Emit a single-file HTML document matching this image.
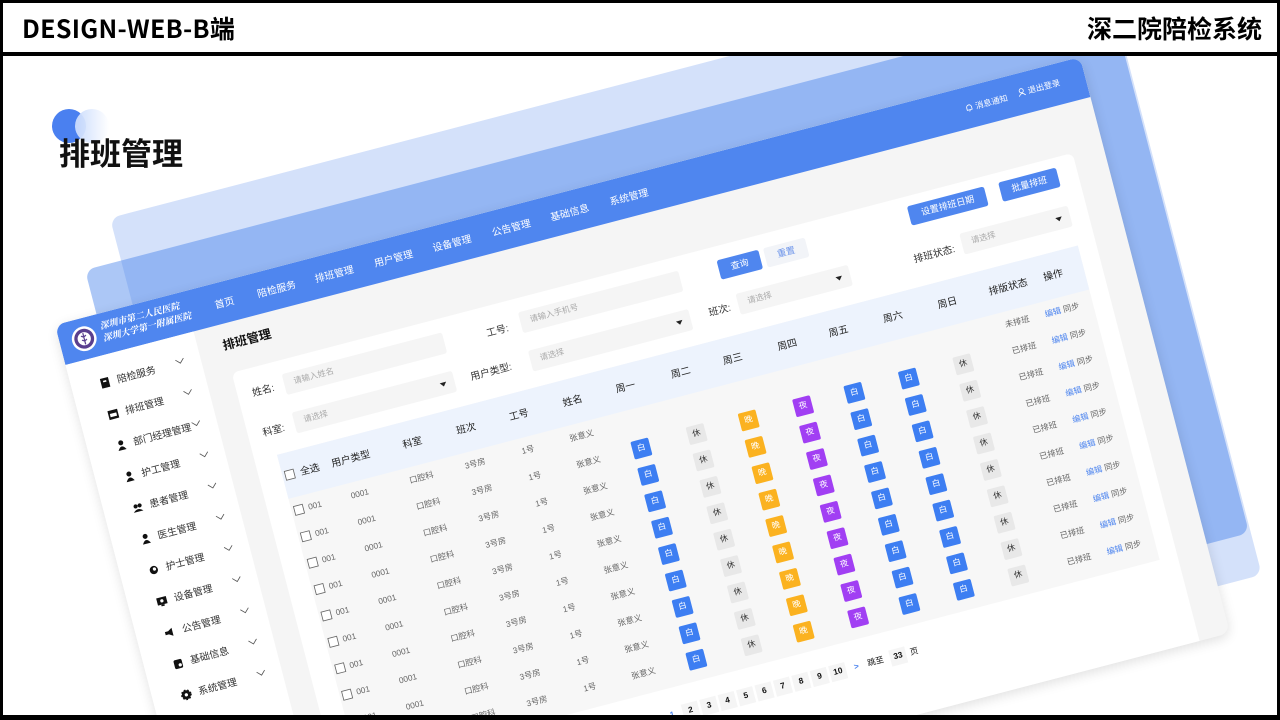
<!DOCTYPE html>
<html><head><meta charset="utf-8">
<style>
*{margin:0;padding:0;box-sizing:border-box}
html,body{width:1280px;height:720px;overflow:hidden}
body{background:#fff;font-family:"Liberation Sans","Noto Sans CJK SC",sans-serif;color:#333}
#wrap{position:relative;width:1280px;height:720px;overflow:hidden}
.abs{position:absolute}
.layer{position:absolute;left:0;top:0;transform-origin:0 0;border-radius:12px}
#app{position:absolute;left:0;top:0;width:1280px;height:720px;transform-origin:0 0;transform:matrix(0.8008,-0.2094,0.2083,0.8,55,325);background:#f5f5f5;border-radius:12px;overflow:hidden;box-shadow:0 4px 14px rgba(0,0,0,.12)}
.hdr{position:absolute;left:0;top:0;width:1280px;height:50px;background:#4f86ef}
.nav{position:absolute;top:18px;font-size:12px;color:#fff;width:80px;text-align:center;margin-left:-40px;line-height:16px}
.side{position:absolute;left:0;top:50px;width:160px;height:670px;background:#fff}
.si{position:absolute;left:22px;width:130px;height:20px;font-size:12px;line-height:20px;color:#333}
.si svg.ic{position:absolute;left:12px;top:3px}
.si span{position:absolute;left:34px;white-space:nowrap}
.si svg.ch{position:absolute;left:106px;top:2px}
.card{position:absolute;left:192px;top:110px;width:1050px;height:640px;background:#fff;border-radius:8px}
.lbl{position:absolute;font-size:12px;color:#333;line-height:16px;white-space:nowrap}
.inp{position:absolute;height:26px;background:#f5f5f5;border-radius:3px;font-size:10px;color:#aaa;line-height:26px;padding-left:12px}
.inp i{position:absolute;right:10px;top:11px;border:4px solid transparent;border-top:5px solid #222;border-bottom:0}
.btn{position:absolute;height:24px;border-radius:3px;font-size:11px;line-height:24px;text-align:center;color:#fff;background:#4f86ef}
.tbl{position:absolute;left:220px;top:220px;width:1000px;height:393px;background:#f7f7f7}
.th{position:absolute;left:0;top:0;width:1000px;height:55px;background:#edf3fd}
.row{position:absolute;left:0;width:1000px;height:33px}
.row>*{position:absolute;top:0;height:33px;line-height:33px;width:70px;text-align:center;font-size:10px;color:#666}
.th>*{position:absolute;top:0;height:55px;line-height:55px;width:70px;text-align:center;font-size:12px;color:#222}
.row>:nth-child(1),.th>:nth-child(1){left:3px;width:14px}
.row>:nth-child(2){left:-6px}
.th>:nth-child(2){left:4px;width:60px}
.row>:nth-child(3),.th>:nth-child(3){left:50px}
.row>:nth-child(4),.th>:nth-child(4){left:127px}
.row>:nth-child(5),.th>:nth-child(5){left:194px}
.row>:nth-child(6),.th>:nth-child(6){left:260px}
.row>:nth-child(7),.th>:nth-child(7){left:327px}
.th>:nth-child(8){left:393px}.th>:nth-child(9){left:462px}.th>:nth-child(10){left:527px}.th>:nth-child(11){left:595px}.th>:nth-child(12){left:659px}.th>:nth-child(13){left:727px}.th>:nth-child(14){left:795px}.th>:nth-child(15){left:871px}.th>:nth-child(16){left:927px}
.cb{display:block;margin-top:10px;width:12px;height:12px;border:1px solid #666;background:#fff}
.row>b{width:22px;height:22px;top:5px;line-height:22px;font-weight:normal;font-size:10px;color:#fff;border-radius:2px}
.row>:nth-child(8){left:417px;background:#3d7ef2}
.row>:nth-child(9){left:486px;background:#e8e8e8;color:#333!important}
.row>:nth-child(10){left:551px;background:#fbb220}
.row>:nth-child(11){left:619px;background:#a13ff3}
.row>:nth-child(12){left:683px;background:#3d7ef2}
.row>:nth-child(13){left:751px;background:#3d7ef2}
.row>:nth-child(14){left:819px;background:#e8e8e8;color:#333!important}
.row>b.e{visibility:hidden}
.row>:nth-child(15){left:871px}
.row>:nth-child(16){left:917px;width:90px}
.ed{color:#4f86ef}
.pg{position:absolute;top:636px;width:20px;height:20px;background:#f5f5f5;font-size:10px;font-weight:bold;line-height:20px;text-align:center;color:#111}
</style></head><body><div id="wrap">

<div class="layer" style="width:1238px;height:770px;background:#d4e1fa;transform:matrix(0.8008,-0.2094,0.2083,0.8,110,218)"></div>
<div class="layer" style="width:1281px;height:664px;background:rgba(70,130,235,0.45);transform:matrix(0.8008,-0.2094,0.2083,0.8,85,270)"></div>

<div id="app">
  <div class="hdr">
    <svg class="abs" style="left:14px;top:9px" width="32" height="32" viewBox="0 0 32 32"><circle cx="16" cy="16" r="15" fill="#fff"/><circle cx="16" cy="16" r="12" fill="#5a3f8e"/><circle cx="16" cy="16" r="8" fill="#fff"/><path d="M16 9v14M13 12q3 3 6 0M13 17q3 3 6 0" stroke="#5a3f8e" stroke-width="1.5" fill="none"/></svg>
    <div class="abs" style="left:52px;top:8px;font-family:'Noto Serif CJK SC',serif;font-size:11px;line-height:15px;color:#fff;font-weight:bold;font-style:italic;white-space:nowrap">深圳市第二人民医院<br>深圳大学第一附属医院</div>
    <div class="nav" style="left:205px">首页</div>
    <div class="nav" style="left:270px">陪检服务</div>
    <div class="nav" style="left:342px">排班管理</div>
    <div class="nav" style="left:416px">用户管理</div>
    <div class="nav" style="left:489px">设备管理</div>
    <div class="nav" style="left:563px">公告管理</div>
    <div class="nav" style="left:636px">基础信息</div>
    <div class="nav" style="left:710px">系统管理</div>
    <div class="abs" style="left:1130px;top:17px;font-size:10px;color:#fff;white-space:nowrap"><svg width="10" height="10" viewBox="0 0 10 10" style="vertical-align:-1px"><path d="M2 8V5a3 3 0 0 1 6 0v3H1.5h7M4 9.5h2" stroke="#fff" fill="none"/></svg> 消息通知</div>
    <div class="abs" style="left:1196px;top:15px;font-size:10px;color:#fff;white-space:nowrap"><svg width="10" height="10" viewBox="0 0 10 10" style="vertical-align:-1px"><circle cx="5" cy="3.5" r="2.5" stroke="#fff" fill="none"/><path d="M1 10q4-6 8 0" stroke="#fff" fill="none"/></svg> 退出登录</div>
  </div>
  <div class="side">
    <div class="si" style="top:23px"><svg class="ic" width="14" height="14"><rect x="2" y="1" width="10" height="12" fill="#111"/><rect x="5" y="4" width="4" height="2" fill="#fff"/></svg><span>陪检服务</span><svg class="ch" width="14" height="10"><polyline points="2,3 7,8 12,3" stroke="#555" fill="none"/></svg></div>
    <div class="si" style="top:62px"><svg class="ic" width="14" height="14"><rect x="1" y="2" width="12" height="11" fill="#111"/><rect x="3" y="6" width="8" height="4" fill="#fff"/></svg><span>排班管理</span><svg class="ch" width="14" height="10"><polyline points="2,3 7,8 12,3" stroke="#555" fill="none"/></svg></div>
    <div class="si" style="top:101px"><svg class="ic" width="14" height="14"><circle cx="7" cy="4" r="3" fill="#111"/><path d="M2 13q5-9 10 0z" fill="#111"/></svg><span>部门经理管理</span><svg class="ch" width="14" height="10"><polyline points="2,3 7,8 12,3" stroke="#555" fill="none"/></svg></div>
    <div class="si" style="top:140px"><svg class="ic" width="14" height="14"><circle cx="7" cy="4" r="3" fill="#111"/><path d="M2 13q5-9 10 0z" fill="#111"/></svg><span>护工管理</span><svg class="ch" width="14" height="10"><polyline points="2,3 7,8 12,3" stroke="#555" fill="none"/></svg></div>
    <div class="si" style="top:179px"><svg class="ic" width="14" height="14"><circle cx="5" cy="5" r="2.5" fill="#111"/><circle cx="10" cy="5" r="2.5" fill="#111"/><path d="M1 12q6-6 12 0z" fill="#111"/></svg><span>患者管理</span><svg class="ch" width="14" height="10"><polyline points="2,3 7,8 12,3" stroke="#555" fill="none"/></svg></div>
    <div class="si" style="top:218px"><svg class="ic" width="14" height="14"><circle cx="7" cy="4" r="3" fill="#111"/><path d="M2 13q5-9 10 0z" fill="#111"/></svg><span>医生管理</span><svg class="ch" width="14" height="10"><polyline points="2,3 7,8 12,3" stroke="#555" fill="none"/></svg></div>
    <div class="si" style="top:257px"><svg class="ic" width="14" height="14"><circle cx="7" cy="7" r="5" fill="#111"/><circle cx="8" cy="6" r="2" fill="#fff"/></svg><span>护士管理</span><svg class="ch" width="14" height="10"><polyline points="2,3 7,8 12,3" stroke="#555" fill="none"/></svg></div>
    <div class="si" style="top:296px"><svg class="ic" width="14" height="14"><rect x="1" y="2" width="12" height="9" fill="#111"/><circle cx="7" cy="6.5" r="2" fill="#fff"/><rect x="5" y="11" width="4" height="2" fill="#111"/></svg><span>设备管理</span><svg class="ch" width="14" height="10"><polyline points="2,3 7,8 12,3" stroke="#555" fill="none"/></svg></div>
    <div class="si" style="top:335px"><svg class="ic" width="14" height="14"><path d="M1 5h4l5-3v10l-5-3H1z" fill="#111"/></svg><span>公告管理</span><svg class="ch" width="14" height="10"><polyline points="2,3 7,8 12,3" stroke="#555" fill="none"/></svg></div>
    <div class="si" style="top:374px"><svg class="ic" width="14" height="14"><rect x="2" y="2" width="10" height="11" rx="2" fill="#111"/><circle cx="9" cy="9" r="2" fill="#fff"/></svg><span>基础信息</span><svg class="ch" width="14" height="10"><polyline points="2,3 7,8 12,3" stroke="#555" fill="none"/></svg></div>
    <div class="si" style="top:413px"><svg class="ic" width="14" height="14"><circle cx="7" cy="7" r="5.5" fill="#111" stroke="#111" stroke-width="2" stroke-dasharray="2 2"/><circle cx="7" cy="7" r="2" fill="#fff"/></svg><span>系统管理</span><svg class="ch" width="14" height="10"><polyline points="2,3 7,8 12,3" stroke="#555" fill="none"/></svg></div>
  </div>
  <div class="abs" style="left:190px;top:65px;font-size:15px;font-weight:bold;color:#111">排班管理</div>
  <div class="card"></div>
  <div class="lbl" style="left:210px;top:132px">姓名:</div>
  <div class="inp" style="left:250px;top:127px;width:200px">请输入姓名</div>
  <div class="lbl" style="left:502px;top:134px">工号:</div>
  <div class="inp" style="left:545px;top:127px;width:200px">请输入手机号</div>
  <div class="btn" style="left:793px;top:127px;width:52px">查询</div>
  <div class="btn" style="left:851px;top:127px;width:52px;background:#f2f4f8;color:#6c94ea">重置</div>
  <div class="btn" style="left:1032px;top:122px;width:96px">设置排班日期</div>
  <div class="btn" style="left:1146px;top:122px;width:72px">批量排班</div>
  <div class="lbl" style="left:210px;top:182px">科室:</div>
  <div class="inp" style="left:250px;top:175px;width:200px">请选择<i></i></div>
  <div class="lbl" style="left:470px;top:180px">用户类型:</div>
  <div class="inp" style="left:545px;top:175px;width:200px">请选择<i></i></div>
  <div class="lbl" style="left:768px;top:178px">班次:</div>
  <div class="inp" style="left:805px;top:172px;width:140px">请选择<i></i></div>
  <div class="lbl" style="left:1024px;top:178px">排班状态:</div>
  <div class="inp" style="left:1085px;top:170px;width:135px">请选择<i></i></div>

  <div class="tbl">
    <div class="th"><span><i class="cb" style="margin-top:21px"></i></span><span>全选</span><span>用户类型</span><span>科室</span><span>班次</span><span>工号</span><span>姓名</span><span>周一</span><span>周二</span><span>周三</span><span>周四</span><span>周五</span><span>周六</span><span>周日</span><span>排版状态</span><span>操作</span></div>
    <div class="row" style="top:55px"><span><i class="cb"></i></span><span>001</span><span>0001</span><span>口腔科</span><span>3号房</span><span>1号</span><span>张意义</span><b class="e">白</b><b class="e">休</b><b class="e">晚</b><b class="e">夜</b><b class="e">白</b><b class="e">白</b><b class="e">休</b><span>未排班</span><span><span class="ed">编辑</span> 同步</span></div>
    <div class="row" style="top:88px"><span><i class="cb"></i></span><span>001</span><span>0001</span><span>口腔科</span><span>3号房</span><span>1号</span><span>张意义</span><b>白</b><b>休</b><b>晚</b><b>夜</b><b>白</b><b>白</b><b>休</b><span>已排班</span><span><span class="ed">编辑</span> 同步</span></div>
    <div class="row" style="top:121px"><span><i class="cb"></i></span><span>001</span><span>0001</span><span>口腔科</span><span>3号房</span><span>1号</span><span>张意义</span><b>白</b><b>休</b><b>晚</b><b>夜</b><b>白</b><b>白</b><b>休</b><span>已排班</span><span><span class="ed">编辑</span> 同步</span></div>
    <div class="row" style="top:154px"><span><i class="cb"></i></span><span>001</span><span>0001</span><span>口腔科</span><span>3号房</span><span>1号</span><span>张意义</span><b>白</b><b>休</b><b>晚</b><b>夜</b><b>白</b><b>白</b><b>休</b><span>已排班</span><span><span class="ed">编辑</span> 同步</span></div>
    <div class="row" style="top:187px"><span><i class="cb"></i></span><span>001</span><span>0001</span><span>口腔科</span><span>3号房</span><span>1号</span><span>张意义</span><b>白</b><b>休</b><b>晚</b><b>夜</b><b>白</b><b>白</b><b>休</b><span>已排班</span><span><span class="ed">编辑</span> 同步</span></div>
    <div class="row" style="top:220px"><span><i class="cb"></i></span><span>001</span><span>0001</span><span>口腔科</span><span>3号房</span><span>1号</span><span>张意义</span><b>白</b><b>休</b><b>晚</b><b>夜</b><b>白</b><b>白</b><b>休</b><span>已排班</span><span><span class="ed">编辑</span> 同步</span></div>
    <div class="row" style="top:253px"><span><i class="cb"></i></span><span>001</span><span>0001</span><span>口腔科</span><span>3号房</span><span>1号</span><span>张意义</span><b>白</b><b>休</b><b>晚</b><b>夜</b><b>白</b><b>白</b><b>休</b><span>已排班</span><span><span class="ed">编辑</span> 同步</span></div>
    <div class="row" style="top:286px"><span><i class="cb"></i></span><span>001</span><span>0001</span><span>口腔科</span><span>3号房</span><span>1号</span><span>张意义</span><b>白</b><b>休</b><b>晚</b><b>夜</b><b>白</b><b>白</b><b>休</b><span>已排班</span><span><span class="ed">编辑</span> 同步</span></div>
    <div class="row" style="top:319px"><span><i class="cb"></i></span><span>001</span><span>0001</span><span>口腔科</span><span>3号房</span><span>1号</span><span>张意义</span><b>白</b><b>休</b><b>晚</b><b>夜</b><b>白</b><b>白</b><b>休</b><span>已排班</span><span><span class="ed">编辑</span> 同步</span></div>
    <div class="row" style="top:352px"><span><i class="cb"></i></span><span>001</span><span>0001</span><span>口腔科</span><span>3号房</span><span>1号</span><span>张意义</span><b>白</b><b>休</b><b>晚</b><b>夜</b><b>白</b><b>白</b><b>休</b><span>已排班</span><span><span class="ed">编辑</span> 同步</span></div>
  </div>
  <div class="pg" style="left:593px;color:#4f86ef;background:#fff">1</div>
  <div class="pg" style="left:616px">2</div>
  <div class="pg" style="left:639px">3</div>
  <div class="pg" style="left:662px">4</div>
  <div class="pg" style="left:685px">5</div>
  <div class="pg" style="left:708px">6</div>
  <div class="pg" style="left:731px">7</div>
  <div class="pg" style="left:754px">8</div>
  <div class="pg" style="left:777px">9</div>
  <div class="pg" style="left:800px">10</div>
  <div class="pg" style="left:823px;color:#4f86ef;background:#fff">&gt;</div>
  <div class="pg" style="left:842px;width:30px;background:#fff;font-weight:normal">跳至</div>
  <div class="pg" style="left:875px">33</div>
  <div class="pg" style="left:895px;background:#fff;font-weight:normal">页</div>
</div>

<div class="abs" style="left:52px;top:109px;width:34px;height:34px;border-radius:50%;background:#4a80f0"></div>
<div class="abs" style="left:75px;top:109px;width:34px;height:34px;border-radius:50%;background:linear-gradient(90deg,rgba(200,218,252,.95),rgba(255,255,255,.9))"></div>
<div class="abs" style="left:59px;top:132px;font-size:31px;font-weight:bold;color:#111;line-height:40px;font-family:'Noto Sans CJK SC',sans-serif">排班管理</div>

<div class="abs" style="left:0;top:0;width:1280px;height:56px;background:#fff;border:3px solid #000;border-bottom:4px solid #000"></div>
<div class="abs" style="left:22px;top:11px;font-size:25px;font-weight:bold;color:#000;line-height:34px;font-family:'Noto Sans CJK SC',sans-serif;letter-spacing:0.3px">DESIGN-WEB-B端</div>
<div class="abs" style="right:18px;top:11px;font-size:25px;font-weight:bold;color:#000;line-height:34px;font-family:'Noto Sans CJK SC',sans-serif">深二院陪检系统</div>
<div class="abs" style="left:0;top:0;width:1280px;height:720px;border:3px solid #000;border-bottom:5px solid #000;pointer-events:none"></div>
</div></body></html>
